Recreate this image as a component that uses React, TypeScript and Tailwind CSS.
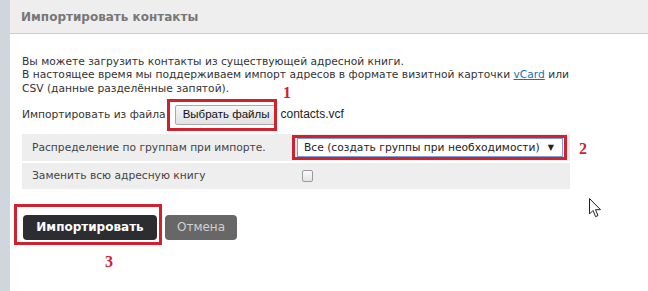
import React from 'react';

const Mark: React.FC<{ className: string }> = ({ className }) => (
  <div className={`absolute border-[3px] border-[#d0222e] ${className}`} />
);

const Num: React.FC<{ className: string; children: React.ReactNode }> = ({ className, children }) => (
  <span
    className={`absolute text-[16px] leading-none font-bold text-[#d0222e] ${className}`}
    style={{ fontFamily: '"Liberation Serif", serif' }}
  >
    {children}
  </span>
);

export default function App() {
  return (
    <div
      className="relative w-[648px] h-[291px] bg-white flex overflow-hidden"
      style={{ fontFamily: '"DejaVu Sans", Verdana, sans-serif' }}
    >
      {/* left strip */}
      <div className="w-[10px] shrink-0 bg-[#cfd6dd]" />

      <div className="flex-1 flex flex-col">
        {/* Header */}
        <div className="h-[34px] shrink-0 bg-[#eeeeee] border-b border-[#cccccc] flex items-center pl-[11px]">
          <h2 className="text-[12px] font-bold text-[#777777]">Импортировать контакты</h2>
        </div>

        <div className="pl-[12px] pt-[21px] text-[10.7px] leading-[13.3px] text-[#333333]">
          <p>
            Вы можете загрузить контакты из существующей адресной книги.
            <br />
            В настоящее время мы поддерживаем импорт адресов в формате визитной карточки{' '}
            <a className="text-[#1a73a8] underline">vCard</a> или
            <br />
            CSV (данные разделённые запятой).
          </p>

          {/* File input */}
          <div className="mt-[10px] h-[20px] flex items-center">
            <span>Импортировать из файла</span>
            <button
              className="ml-[9px] h-[20px] px-[7px] border border-[#a9a9a9] rounded-[2px] bg-gradient-to-b from-[#f7f7f7] to-[#e1e1e1] text-[#111111] text-[11.5px]"
              style={{ fontFamily: '"Liberation Sans", Arial, sans-serif' }}
            >
              Выбрать файлы
            </button>
            <span
              className="ml-[3px] text-[12px] text-[#222222]"
              style={{ fontFamily: '"Liberation Sans", Arial, sans-serif' }}
            >
              contacts.vcf
            </span>
          </div>

          {/* Options table */}
          <div className="mt-[9px] w-[548px] flex flex-col gap-[2px] text-[#444444]">
            <div className="h-[27px] bg-[#eeeeee] flex items-center">
              <div className="w-[275px] pl-[10px]">Распределение по группам при импорте.</div>
              <div className="w-[266px] h-[19px] bg-white border border-[#7b9ed6] flex items-center justify-between pl-[6px] pr-[8px] text-[#222222]">
                <span>Все (создать группы при необходимости)</span>
                <span className="text-[8px]">▼</span>
              </div>
            </div>
            <div className="h-[26px] bg-[#eeeeee] flex items-center">
              <div className="w-[280px] pl-[10px]">Заменить всю адресную книгу</div>
              <div className="w-[11px] h-[12px] rounded-[2px] border border-[#9a9a9a] bg-gradient-to-b from-[#fbfbfb] to-[#e4e4e4]" />
            </div>
          </div>

          {/* Buttons */}
          <div className="mt-[26px] flex gap-[8px] ml-[1px]">
            <button className="w-[134px] h-[25px] rounded-[4px] bg-[#2b2d31] text-white text-[12px] font-bold">
              Импортировать
            </button>
            <button className="w-[72px] h-[25px] rounded-[4px] bg-[#676767] text-[#d0d0d0] text-[12px]">
              Отмена
            </button>
          </div>
        </div>
      </div>

      {/* annotations */}
      <Mark className="left-[167px] top-[99px] w-[110px] h-[32px]" />
      <Mark className="left-[292px] top-[135px] w-[275px] h-[25px]" />
      <Mark className="left-[14px] top-[204px] w-[148px] h-[41px]" />
      <Num className="left-[283px] top-[85px]">1</Num>
      <Num className="left-[579px] top-[141px]">2</Num>
      <Num className="left-[105px] top-[254px]">3</Num>

      {/* mouse cursor */}
      <svg className="absolute left-[589px] top-[198px]" width="13" height="20" viewBox="0 0 13 20">
        <path
          d="M0.5 0.5 L0.5 16 L4 12.5 L6.6 18.6 L9 17.6 L6.5 11.7 L11.5 11.7 Z"
          fill="white"
          stroke="#222"
          strokeWidth="1"
          strokeLinejoin="round"
        />
      </svg>
    </div>
  );
}
